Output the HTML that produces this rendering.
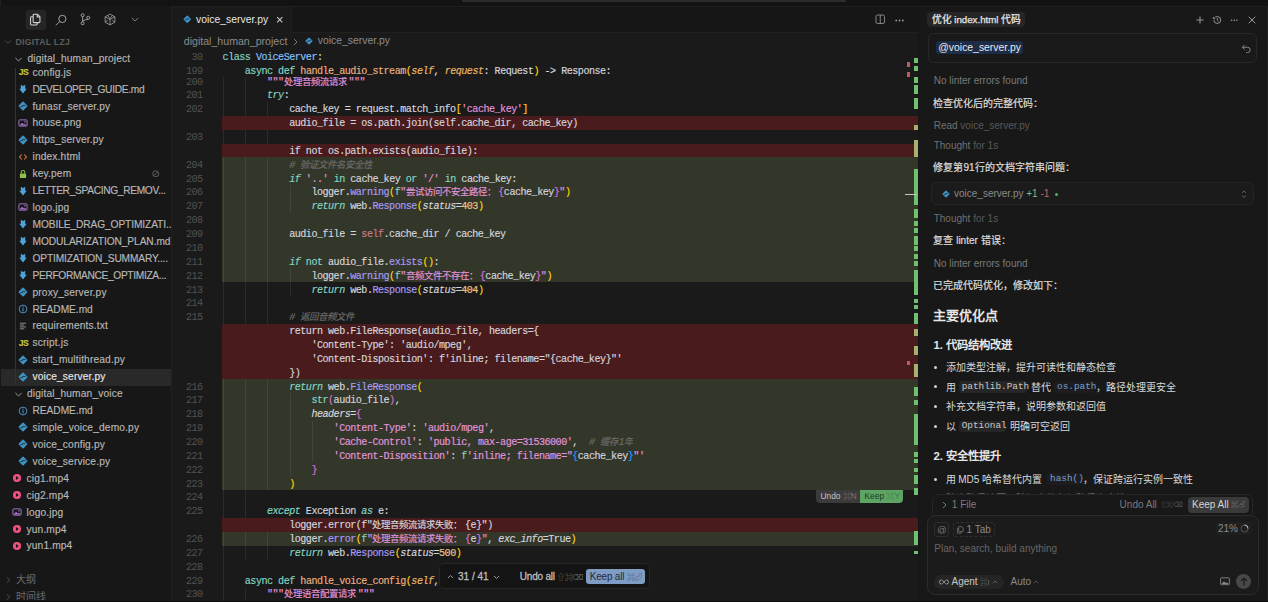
<!DOCTYPE html>
<html lang="zh-CN"><head><meta charset="utf-8"><style>
*{box-sizing:border-box;margin:0;padding:0}
html,body{width:1268px;height:602px;overflow:hidden;background:#181818}
body{position:relative;font-family:"Liberation Sans",sans-serif;font-size:10px;color:#cccccc}
.abs{position:absolute}
#topband{position:absolute;left:0;top:0;width:1268px;height:6.5px;background:#131313;border-bottom:1.5px solid #1f1f1f}
#topscroll{position:absolute;left:462px;top:0;width:384px;height:1.6px;background:#2c2c2c;border-radius:0 0 1px 1px}
#sidebar{position:absolute;left:0;top:6px;width:171px;height:594px;background:#171717;overflow:hidden}
#sbborder{position:absolute;left:171px;top:6.5px;width:1px;height:594px;background:#222222}
#leftedge{position:absolute;left:0;top:0;width:1px;height:602px;background:#222}
.act{position:absolute;top:3.6px;width:19.2px;height:20px;border-radius:3px}
.act svg{position:absolute;left:50%;top:50%;transform:translate(-50%,-50%)}
.row{position:absolute;height:16.92px;line-height:16.92px;white-space:nowrap;color:#b8b8b8;display:flex;align-items:center;-webkit-text-stroke:.15px}
.row.sel{color:#e6e6e6}
.selrow{position:absolute;left:1px;width:170px;height:16.92px;background:#292929}
.fi{width:10px;height:10px;flex:none;margin-right:3.5px;position:relative;top:-1px;left:-.8px}
.jsi{font-weight:700;font-size:8.6px;color:#c8c83e;line-height:10px;letter-spacing:-.55px;text-align:left;padding-left:.5px}
.chev{width:9px;height:9px;flex:none}
.nm{font-size:10.2px}
#editor{position:absolute;left:172px;top:6.5px;width:746px;height:594px;overflow:hidden;background:#1a1a1a}
.ln{position:absolute;left:0;width:202.6px;text-align:right;font-family:"Liberation Mono",monospace;font-size:10.1px;letter-spacing:-0.508px;line-height:13.86px;height:13.86px;color:#535353;white-space:pre}
.cl{position:absolute;left:222.6px;font-family:"Liberation Mono",monospace;font-size:10.1px;letter-spacing:-0.508px;line-height:13.86px;height:13.86px;color:#d6d6dd;white-space:pre;-webkit-text-stroke:.15px}
.cj{display:inline-block;overflow:hidden;white-space:nowrap;vertical-align:top;letter-spacing:0;font-size:9.4px}
.bandr{position:absolute;left:222.4px;width:695.2px;height:13.86px;background:#4a1b1c}
.bandg{position:absolute;left:222.4px;width:695.2px;height:13.86px;background:#33372a}
.guide{position:absolute;width:1px;height:13.86px;background:rgba(255,255,255,.075)}
.kw{color:#83d6c5}
.kwi{color:#83d6c5;font-style:italic}
.cls{color:#87c3ff}
.fn{color:#efb080}
.par{color:#f0b866;font-style:italic}
.parm{color:#d6d6dd;font-style:italic}
.str{color:#e394dc}
.num{color:#ebc88d}
.com{color:#6d6d6d;font-style:italic}
.meth{color:#aa9bf5}
.slf{color:#cc7c8a}
.b1{color:#ffd700}
.b2{color:#da70d6}
.b3{color:#179fff}
.sticky{position:absolute;left:0;top:49.6px;width:918px;height:27.9px;background:#1a1a1a}
#panel{position:absolute;left:918.7px;top:6.5px;width:349.3px;height:594px;background:#181818;overflow:hidden}
#pborder{position:absolute;left:917.5px;top:6.5px;width:1.2px;height:594px;background:#151515}
#bottomband{position:absolute;left:0;top:600.8px;width:1268px;height:3px;background:#0c0c0c}
#rightedge{position:absolute;left:1266.5px;top:6px;width:1.5px;height:596px;background:#202020}
.pt{position:absolute;white-space:nowrap;line-height:12px}
</style></head><body>
<div id="topband"></div><div id="topscroll"></div>
<div id="leftedge"></div>
<div id="sidebar">
  <div class="act" style="left:26.4px;background:#262626"></div>
  <svg class="abs" style="left:29.3px;top:7.2px" width="12.5" height="13" viewBox="0 0 16 16"><path fill="none" stroke="#d4d4d4" stroke-width="1.35" d="M6.5 1.2h4.3l3.2 3.2v6.4a1.2 1.2 0 01-1.2 1.2H6.5a1.2 1.2 0 01-1.2-1.2V2.4a1.2 1.2 0 011.2-1.2zM10.5 1.2v3.5h3.5M5.3 4.5H3.2A1.2 1.2 0 002 5.7v8.1A1.2 1.2 0 003.2 15h6.1a1.2 1.2 0 001.2-1.2V12"/></svg>
  <svg class="abs" style="left:54.5px;top:7.5px" width="12" height="12.5" viewBox="0 0 16 16"><circle cx="9.8" cy="6.2" r="4.8" fill="none" stroke="#a8a8a8" stroke-width="1.3"/><path d="M6.4 9.6L1.2 14.8" stroke="#a8a8a8" stroke-width="1.3"/></svg>
  <svg class="abs" style="left:80px;top:7.3px" width="10.5" height="12.5" viewBox="0 0 14 16"><circle cx="3.5" cy="2.6" r="2" fill="none" stroke="#a8a8a8" stroke-width="1.2"/><circle cx="3.5" cy="13.4" r="2" fill="none" stroke="#a8a8a8" stroke-width="1.2"/><circle cx="11" cy="6" r="2" fill="none" stroke="#a8a8a8" stroke-width="1.2"/><path d="M3.5 4.6v6.8M3.5 11.2c.3-3 7.5-2.4 7.5-3.2" fill="none" stroke="#a8a8a8" stroke-width="1.2"/></svg>
  <svg class="abs" style="left:103.6px;top:7.0px" width="12" height="13" viewBox="0 0 16 16"><path d="M8 .8l6.5 3.6v7.2L8 15.2l-6.5-3.6V4.4z M1.5 4.4L8 8l6.5-3.6M8 8v7.2M4.5 2.6L8 6.5l3.5-3.9M8 6.5V8M1.5 11.6L5 9M14.5 11.6L11 9" fill="none" stroke="#a8a8a8" stroke-width="1.05"/></svg>
  <svg class="abs" style="left:130.5px;top:11.0px" width="8" height="5.5" viewBox="0 0 10 7"><path d="M1 1.2l4 4 4-4" fill="none" stroke="#8a8a8a" stroke-width="1.2"/></svg>
  <svg class="abs" style="left:4px;top:32px" width="8" height="8" viewBox="0 0 10 10"><path d="M1.5 3.2L5 6.7l3.5-3.5" fill="none" stroke="#5a5a5a" stroke-width="1"/></svg>
  <div class="pt" style="left:15.5px;top:29.6px;font-size:8.6px;font-weight:700;color:#5e5e5e;letter-spacing:.3px">DIGITAL LZJ</div>
  <div style="position:absolute;left:0;top:0;width:171px;height:594px;margin-top:-6px">
  <div class="row" style="top:64.68px;left:19px"><span class="fi jsi">JS</span><span class="nm" style="letter-spacing:0.15px">config.js</span></div>
<div class="row" style="top:81.60px;left:19px"><svg class="fi" viewBox="0 0 16 16"><path fill="#4ea2d8" d="M4.5 1l3.5 2 3.5-2v6.5H14L8 15 2 7.5h2.5z"/></svg><span class="nm" style="letter-spacing:-0.3px">DEVELOPER_GUIDE.md</span></div>
<div class="row" style="top:98.52px;left:19px"><svg class="fi" viewBox="0 0 16 16"><path d="M8 2.2L13.8 8 8 13.8 2.2 8z" fill="#3f92c4" stroke="#3f92c4" stroke-width="2.6" stroke-linejoin="round"/><path d="M3.6 8.9H7.4V7.1h5" fill="none" stroke="#1a1a1a" stroke-width="1.1"/></svg><span class="nm" style="letter-spacing:0.15px">funasr_server.py</span></div>
<div class="row" style="top:115.44px;left:19px"><svg class="fi" viewBox="0 0 16 16"><rect x="1.5" y="3" width="13" height="10" rx="1" fill="none" stroke="#a074c4" stroke-width="1.6"/><path fill="#a074c4" d="M2.5 12l4-4.5 3 3 1.5-1.5 3 3z"/><circle cx="11" cy="6" r="1.2" fill="#a074c4"/></svg><span class="nm" style="letter-spacing:0.15px">house.png</span></div>
<div class="row" style="top:132.36px;left:19px"><svg class="fi" viewBox="0 0 16 16"><path d="M8 2.2L13.8 8 8 13.8 2.2 8z" fill="#3f92c4" stroke="#3f92c4" stroke-width="2.6" stroke-linejoin="round"/><path d="M3.6 8.9H7.4V7.1h5" fill="none" stroke="#1a1a1a" stroke-width="1.1"/></svg><span class="nm" style="letter-spacing:0.15px">https_server.py</span></div>
<div class="row" style="top:149.28px;left:19px"><svg class="fi" viewBox="0 0 16 16"><path fill="none" stroke="#e37933" stroke-width="1.8" d="M6 4L2.5 8 6 12M10 4l3.5 4L10 12"/></svg><span class="nm" style="letter-spacing:0.15px">index.html</span></div>
<div class="row" style="top:166.20px;left:19px"><svg class="fi" viewBox="0 0 16 16"><rect x="3" y="7" width="10" height="7.5" rx="1" fill="#8dc149"/><path d="M5.2 7V5.2a2.8 2.8 0 015.6 0V7" fill="none" stroke="#8dc149" stroke-width="1.7"/></svg><span class="nm" style="letter-spacing:0.15px">key.pem</span></div>
<div class="row" style="top:183.12px;left:19px"><svg class="fi" viewBox="0 0 16 16"><path fill="#4ea2d8" d="M4.5 1l3.5 2 3.5-2v6.5H14L8 15 2 7.5h2.5z"/></svg><span class="nm" style="letter-spacing:-0.32px">LETTER_SPACING_REMOV...</span></div>
<div class="row" style="top:200.04px;left:19px"><svg class="fi" viewBox="0 0 16 16"><rect x="1.5" y="3" width="13" height="10" rx="1" fill="none" stroke="#a074c4" stroke-width="1.6"/><path fill="#a074c4" d="M2.5 12l4-4.5 3 3 1.5-1.5 3 3z"/><circle cx="11" cy="6" r="1.2" fill="#a074c4"/></svg><span class="nm" style="letter-spacing:0.15px">logo.jpg</span></div>
<div class="row" style="top:216.96px;left:19px"><svg class="fi" viewBox="0 0 16 16"><path fill="#4ea2d8" d="M4.5 1l3.5 2 3.5-2v6.5H14L8 15 2 7.5h2.5z"/></svg><span class="nm" style="letter-spacing:-0.10px">MOBILE_DRAG_OPTIMIZATI...</span></div>
<div class="row" style="top:233.88px;left:19px"><svg class="fi" viewBox="0 0 16 16"><path fill="#4ea2d8" d="M4.5 1l3.5 2 3.5-2v6.5H14L8 15 2 7.5h2.5z"/></svg><span class="nm" style="letter-spacing:-0.08px">MODULARIZATION_PLAN.md</span></div>
<div class="row" style="top:250.80px;left:19px"><svg class="fi" viewBox="0 0 16 16"><path fill="#4ea2d8" d="M4.5 1l3.5 2 3.5-2v6.5H14L8 15 2 7.5h2.5z"/></svg><span class="nm" style="letter-spacing:-0.16px">OPTIMIZATION_SUMMARY....</span></div>
<div class="row" style="top:267.72px;left:19px"><svg class="fi" viewBox="0 0 16 16"><path fill="#4ea2d8" d="M4.5 1l3.5 2 3.5-2v6.5H14L8 15 2 7.5h2.5z"/></svg><span class="nm" style="letter-spacing:-0.34px">PERFORMANCE_OPTIMIZA...</span></div>
<div class="row" style="top:284.64px;left:19px"><svg class="fi" viewBox="0 0 16 16"><path d="M8 2.2L13.8 8 8 13.8 2.2 8z" fill="#3f92c4" stroke="#3f92c4" stroke-width="2.6" stroke-linejoin="round"/><path d="M3.6 8.9H7.4V7.1h5" fill="none" stroke="#1a1a1a" stroke-width="1.1"/></svg><span class="nm" style="letter-spacing:0.15px">proxy_server.py</span></div>
<div class="row" style="top:301.56px;left:19px"><svg class="fi" viewBox="0 0 16 16"><circle cx="8" cy="8" r="6.2" fill="none" stroke="#4ea2d8" stroke-width="1.4"/><rect x="7.2" y="6.8" width="1.6" height="5" fill="#4ea2d8"/><circle cx="8" cy="4.8" r="1" fill="#4ea2d8"/></svg><span class="nm" style="letter-spacing:-0.04px">README.md</span></div>
<div class="row" style="top:318.48px;left:19px"><svg class="fi" viewBox="0 0 16 16"><path stroke="#9a9a9a" stroke-width="1.4" d="M3 3.5h10M3 6.5h7M3 9.5h10M3 12.5h7"/></svg><span class="nm" style="letter-spacing:0.15px">requirements.txt</span></div>
<div class="row" style="top:335.40px;left:19px"><span class="fi jsi">JS</span><span class="nm" style="letter-spacing:0.15px">script.js</span></div>
<div class="row" style="top:352.32px;left:19px"><svg class="fi" viewBox="0 0 16 16"><path d="M8 2.2L13.8 8 8 13.8 2.2 8z" fill="#3f92c4" stroke="#3f92c4" stroke-width="2.6" stroke-linejoin="round"/><path d="M3.6 8.9H7.4V7.1h5" fill="none" stroke="#1a1a1a" stroke-width="1.1"/></svg><span class="nm" style="letter-spacing:0.15px">start_multithread.py</span></div>
<div class="selrow" style="top:369.24px"></div>
<div class="row sel" style="top:369.24px;left:19px"><svg class="fi" viewBox="0 0 16 16"><path d="M8 2.2L13.8 8 8 13.8 2.2 8z" fill="#3f92c4" stroke="#3f92c4" stroke-width="2.6" stroke-linejoin="round"/><path d="M3.6 8.9H7.4V7.1h5" fill="none" stroke="#1a1a1a" stroke-width="1.1"/></svg><span class="nm" style="letter-spacing:0.15px">voice_server.py</span></div>
<div class="row" style="top:386.16px;left:14px"><svg class="chev" viewBox="0 0 10 10"><path d="M1.5 3.2L5 6.7l3.5-3.5" fill="none" stroke="#9a9a9a" stroke-width="1.1"/></svg><span class="nm" style="margin-left:4px;letter-spacing:.15px">digital_human_voice</span></div>
<div class="row" style="top:403.08px;left:19px"><svg class="fi" viewBox="0 0 16 16"><circle cx="8" cy="8" r="6.2" fill="none" stroke="#4ea2d8" stroke-width="1.4"/><rect x="7.2" y="6.8" width="1.6" height="5" fill="#4ea2d8"/><circle cx="8" cy="4.8" r="1" fill="#4ea2d8"/></svg><span class="nm" style="letter-spacing:-0.04px">README.md</span></div>
<div class="row" style="top:420.00px;left:19px"><svg class="fi" viewBox="0 0 16 16"><path d="M8 2.2L13.8 8 8 13.8 2.2 8z" fill="#3f92c4" stroke="#3f92c4" stroke-width="2.6" stroke-linejoin="round"/><path d="M3.6 8.9H7.4V7.1h5" fill="none" stroke="#1a1a1a" stroke-width="1.1"/></svg><span class="nm" style="letter-spacing:0.15px">simple_voice_demo.py</span></div>
<div class="row" style="top:436.92px;left:19px"><svg class="fi" viewBox="0 0 16 16"><path d="M8 2.2L13.8 8 8 13.8 2.2 8z" fill="#3f92c4" stroke="#3f92c4" stroke-width="2.6" stroke-linejoin="round"/><path d="M3.6 8.9H7.4V7.1h5" fill="none" stroke="#1a1a1a" stroke-width="1.1"/></svg><span class="nm" style="letter-spacing:0.15px">voice_config.py</span></div>
<div class="row" style="top:453.84px;left:19px"><svg class="fi" viewBox="0 0 16 16"><path d="M8 2.2L13.8 8 8 13.8 2.2 8z" fill="#3f92c4" stroke="#3f92c4" stroke-width="2.6" stroke-linejoin="round"/><path d="M3.6 8.9H7.4V7.1h5" fill="none" stroke="#1a1a1a" stroke-width="1.1"/></svg><span class="nm" style="letter-spacing:0.15px">voice_service.py</span></div>
<div class="row" style="top:470.76px;left:13px"><svg class="fi" viewBox="0 0 16 16"><circle cx="8" cy="8" r="6.5" fill="#f0507f"/><path fill="#181818" d="M6.3 4.9v6.2L11 8z"/></svg><span class="nm" style="letter-spacing:0.15px">cig1.mp4</span></div>
<div class="row" style="top:487.68px;left:13px"><svg class="fi" viewBox="0 0 16 16"><circle cx="8" cy="8" r="6.5" fill="#f0507f"/><path fill="#181818" d="M6.3 4.9v6.2L11 8z"/></svg><span class="nm" style="letter-spacing:0.15px">cig2.mp4</span></div>
<div class="row" style="top:504.60px;left:13px"><svg class="fi" viewBox="0 0 16 16"><rect x="1.5" y="3" width="13" height="10" rx="1" fill="none" stroke="#a074c4" stroke-width="1.6"/><path fill="#a074c4" d="M2.5 12l4-4.5 3 3 1.5-1.5 3 3z"/><circle cx="11" cy="6" r="1.2" fill="#a074c4"/></svg><span class="nm" style="letter-spacing:0.15px">logo.jpg</span></div>
<div class="row" style="top:521.52px;left:13px"><svg class="fi" viewBox="0 0 16 16"><circle cx="8" cy="8" r="6.5" fill="#f0507f"/><path fill="#181818" d="M6.3 4.9v6.2L11 8z"/></svg><span class="nm" style="letter-spacing:0.15px">yun.mp4</span></div>
<div class="row" style="top:538.44px;left:13px"><svg class="fi" viewBox="0 0 16 16"><circle cx="8" cy="8" r="6.5" fill="#f0507f"/><path fill="#181818" d="M6.3 4.9v6.2L11 8z"/></svg><span class="nm" style="letter-spacing:0.15px">yun1.mp4</span></div>
  <div class="guide" style="left:14.9px;top:67px;height:318px;background:#333"></div>
  <div class="row" style="top:51.3px;left:0;width:171px;background:#171717;padding-left:14px"><svg class="chev" viewBox="0 0 10 10"><path d="M1.5 3.2L5 6.7l3.5-3.5" fill="none" stroke="#9a9a9a" stroke-width="1.1"/></svg><span class="nm" style="margin-left:4.5px;letter-spacing:.15px">digital_human_project</span></div>
  <svg class="abs" style="left:152px;top:169.5px" width="7.5" height="7.5" viewBox="0 0 10 10"><circle cx="5" cy="5" r="4" fill="none" stroke="#7a7a7a" stroke-width="1"/><path d="M2.5 7.5l5-5" stroke="#7a7a7a" stroke-width="1"/></svg>
  <svg class="abs" style="left:4.5px;top:575.5px" width="7" height="8" viewBox="0 0 8 10"><path d="M2 1.5L5.5 5 2 8.5" fill="none" stroke="#5a5a5a" stroke-width="1"/></svg>
  <div class="pt" style="left:15.5px;top:573.5px;color:#6a6a6a">大纲</div>
  <svg class="abs" style="left:4.5px;top:592.5px" width="7" height="8" viewBox="0 0 8 10"><path d="M2 1.5L5.5 5 2 8.5" fill="none" stroke="#5a5a5a" stroke-width="1"/></svg>
  <div class="pt" style="left:15.5px;top:590.5px;color:#6a6a6a">时间线</div>
  </div>
</div>
<div id="sbborder"></div>
<div id="editor">
  <div style="position:absolute;left:-172px;top:-6.5px;width:1268px;height:602px">
  <div class="abs" style="left:172px;top:6.5px;width:746px;height:26.5px;background:#161616;border-bottom:1.5px solid #202020"></div>
  <div class="abs" style="left:172px;top:6.5px;width:120px;height:26.5px;background:#1a1a1a;border-right:1px solid #202020"></div>
  <svg class="abs" style="left:183px;top:15px;width:8.5px;height:8.5px" viewBox="0 0 16 16"><path d="M8 2.2L13.8 8 8 13.8 2.2 8z" fill="#3f92c4" stroke="#3f92c4" stroke-width="2.6" stroke-linejoin="round"/><path d="M3.6 8.9H7.4V7.1h5" fill="none" stroke="#1a1a1a" stroke-width="1.1"/></svg>
  <div class="pt" style="left:196px;top:13.5px;font-size:10.4px;color:#e6e6e6">voice_server.py</div>
  <svg class="abs" style="left:275.5px;top:15.5px" width="7.5" height="7.5" viewBox="0 0 10 10"><path d="M1.5 1.5l7 7M8.5 1.5l-7 7" stroke="#cfcfcf" stroke-width="1.35"/></svg>
  <svg class="abs" style="left:874.5px;top:14.25px" width="10.5" height="10.5" viewBox="0 0 16 16"><rect x="1.5" y="1.5" width="13" height="13" rx="2.5" fill="none" stroke="#9a9a9a" stroke-width="1.3"/><path d="M8 1.5v13" stroke="#9a9a9a" stroke-width="1.3"/></svg>
  <svg class="abs" style="left:895px;top:18.5px" width="9" height="3" viewBox="0 0 9 3"><circle cx="1.2" cy="1.5" r=".9" fill="#9a9a9a"/><circle cx="4.5" cy="1.5" r=".9" fill="#9a9a9a"/><circle cx="7.8" cy="1.5" r=".9" fill="#9a9a9a"/></svg>
  <div class="pt" style="left:183.8px;top:35.4px;font-size:10.6px;color:#8c8c8c">digital_human_project</div>
  <svg class="abs" style="left:292.5px;top:37.5px" width="5" height="8" viewBox="0 0 5 8"><path d="M1 1l3 3-3 3" fill="none" stroke="#7a7a7a" stroke-width="1"/></svg>
  <svg class="abs" style="left:304.5px;top:37.2px;width:8px;height:8px" viewBox="0 0 16 16"><path d="M8 2.2L13.8 8 8 13.8 2.2 8z" fill="#3f92c4" stroke="#3f92c4" stroke-width="2.6" stroke-linejoin="round"/><path d="M3.6 8.9H7.4V7.1h5" fill="none" stroke="#1a1a1a" stroke-width="1.1"/></svg>
  <div class="pt" style="left:317.8px;top:35.4px;font-size:10.4px;color:#8c8c8c">voice_server.py</div>
  <div style="position:absolute;left:0;top:0">
  <div class="guide" style="left:222.90px;top:74.30px"></div><div class="guide" style="left:245.10px;top:74.30px"></div><div class="ln" style="top:75.60px">200</div><div class="cl" style="top:75.60px">        <span class="str">"""<span class="cj" style="width:64.75px">处理音频流请求</span>"""</span></div><div class="guide" style="left:222.90px;top:88.16px"></div><div class="guide" style="left:245.10px;top:88.16px"></div><div class="ln" style="top:89.46px">201</div><div class="cl" style="top:89.46px">        <span class="kwi">try</span>:</div><div class="guide" style="left:222.90px;top:102.02px"></div><div class="guide" style="left:245.10px;top:102.02px"></div><div class="guide" style="left:267.30px;top:102.02px"></div><div class="ln" style="top:103.32px">202</div><div class="cl" style="top:103.32px">            cache_key = request.match_info<span class="b1">[</span><span class="str">'cache_key'</span><span class="b1">]</span></div><div class="bandr" style="top:115.88px;height:13.86px"></div><div class="cl" style="top:117.18px">            audio_file = os.path.join(self.cache_dir, cache_key)</div><div class="guide" style="left:222.90px;top:129.74px"></div><div class="guide" style="left:245.10px;top:129.74px"></div><div class="guide" style="left:267.30px;top:129.74px"></div><div class="ln" style="top:131.04px">203</div><div class="bandr" style="top:143.60px;height:13.86px"></div><div class="cl" style="top:144.90px">            if not os.path.exists(audio_file):</div><div class="bandg" style="top:157.46px;height:124.74px"></div><div class="guide" style="left:222.90px;top:157.46px"></div><div class="guide" style="left:245.10px;top:157.46px"></div><div class="guide" style="left:267.30px;top:157.46px"></div><div class="ln" style="top:158.76px">204</div><div class="cl" style="top:158.76px">            <span class="com"># <span class="cj" style="width:74.00px">验证文件名安全性</span></span></div><div class="guide" style="left:222.90px;top:171.32px"></div><div class="guide" style="left:245.10px;top:171.32px"></div><div class="guide" style="left:267.30px;top:171.32px"></div><div class="ln" style="top:172.62px">205</div><div class="cl" style="top:172.62px">            <span class="kwi">if</span> <span class="str">'..'</span> <span class="kw">in</span> cache_key <span class="kw">or</span> <span class="str">'/'</span> <span class="kw">in</span> cache_key:</div><div class="guide" style="left:222.90px;top:185.18px"></div><div class="guide" style="left:245.10px;top:185.18px"></div><div class="guide" style="left:267.30px;top:185.18px"></div><div class="guide" style="left:289.50px;top:185.18px"></div><div class="ln" style="top:186.48px">206</div><div class="cl" style="top:186.48px">                logger.<span class="meth">warning</span><span class="b1">(</span><span class="kw">f</span><span class="str">"<span class="cj" style="width:92.50px">尝试访问不安全路径：</span></span><span class="b2">{</span>cache_key<span class="b2">}</span><span class="str">"</span><span class="b1">)</span></div><div class="guide" style="left:222.90px;top:199.04px"></div><div class="guide" style="left:245.10px;top:199.04px"></div><div class="guide" style="left:267.30px;top:199.04px"></div><div class="guide" style="left:289.50px;top:199.04px"></div><div class="ln" style="top:200.34px">207</div><div class="cl" style="top:200.34px">                <span class="kwi">return</span> web.<span class="meth">Response</span><span class="b1">(</span><span class="parm">status</span>=<span class="num">403</span><span class="b1">)</span></div><div class="guide" style="left:222.90px;top:212.90px"></div><div class="guide" style="left:245.10px;top:212.90px"></div><div class="guide" style="left:267.30px;top:212.90px"></div><div class="ln" style="top:214.20px">208</div><div class="guide" style="left:222.90px;top:226.76px"></div><div class="guide" style="left:245.10px;top:226.76px"></div><div class="guide" style="left:267.30px;top:226.76px"></div><div class="ln" style="top:228.06px">209</div><div class="cl" style="top:228.06px">            audio_file = <span class="slf">self</span>.cache_dir / cache_key</div><div class="guide" style="left:222.90px;top:240.62px"></div><div class="guide" style="left:245.10px;top:240.62px"></div><div class="guide" style="left:267.30px;top:240.62px"></div><div class="ln" style="top:241.92px">210</div><div class="guide" style="left:222.90px;top:254.48px"></div><div class="guide" style="left:245.10px;top:254.48px"></div><div class="guide" style="left:267.30px;top:254.48px"></div><div class="ln" style="top:255.78px">211</div><div class="cl" style="top:255.78px">            <span class="kwi">if</span> <span class="kw">not</span> audio_file.<span class="meth">exists</span><span class="b1">(</span><span class="b1">)</span>:</div><div class="guide" style="left:222.90px;top:268.34px"></div><div class="guide" style="left:245.10px;top:268.34px"></div><div class="guide" style="left:267.30px;top:268.34px"></div><div class="guide" style="left:289.50px;top:268.34px"></div><div class="ln" style="top:269.64px">212</div><div class="cl" style="top:269.64px">                logger.<span class="meth">warning</span><span class="b1">(</span><span class="kw">f</span><span class="str">"<span class="cj" style="width:74.00px">音频文件不存在：</span></span><span class="b2">{</span>cache_key<span class="b2">}</span><span class="str">"</span><span class="b1">)</span></div><div class="guide" style="left:222.90px;top:282.20px"></div><div class="guide" style="left:245.10px;top:282.20px"></div><div class="guide" style="left:267.30px;top:282.20px"></div><div class="guide" style="left:289.50px;top:282.20px"></div><div class="ln" style="top:283.50px">213</div><div class="cl" style="top:283.50px">                <span class="kwi">return</span> web.<span class="meth">Response</span><span class="b1">(</span><span class="parm">status</span>=<span class="num">404</span><span class="b1">)</span></div><div class="guide" style="left:222.90px;top:296.06px"></div><div class="guide" style="left:245.10px;top:296.06px"></div><div class="guide" style="left:267.30px;top:296.06px"></div><div class="ln" style="top:297.36px">214</div><div class="guide" style="left:222.90px;top:309.92px"></div><div class="guide" style="left:245.10px;top:309.92px"></div><div class="guide" style="left:267.30px;top:309.92px"></div><div class="ln" style="top:311.22px">215</div><div class="cl" style="top:311.22px">            <span class="com"># <span class="cj" style="width:55.50px">返回音频文件</span></span></div><div class="bandr" style="top:323.78px;height:55.44px"></div><div class="cl" style="top:325.08px">            return web.FileResponse(audio_file, headers={</div><div class="cl" style="top:338.94px">                'Content-Type': 'audio/mpeg',</div><div class="cl" style="top:352.80px">                'Content-Disposition': f'inline; filename="{cache_key}"'</div><div class="cl" style="top:366.66px">            })</div><div class="bandg" style="top:379.22px;height:110.88px"></div><div class="guide" style="left:222.90px;top:379.22px"></div><div class="guide" style="left:245.10px;top:379.22px"></div><div class="guide" style="left:267.30px;top:379.22px"></div><div class="ln" style="top:380.52px">216</div><div class="cl" style="top:380.52px">            <span class="kwi">return</span> web.<span class="meth">FileResponse</span><span class="b1">(</span></div><div class="guide" style="left:222.90px;top:393.08px"></div><div class="guide" style="left:245.10px;top:393.08px"></div><div class="guide" style="left:267.30px;top:393.08px"></div><div class="guide" style="left:289.50px;top:393.08px"></div><div class="ln" style="top:394.38px">217</div><div class="cl" style="top:394.38px">                <span class="kw">str</span><span class="b2">(</span>audio_file<span class="b2">)</span>,</div><div class="guide" style="left:222.90px;top:406.94px"></div><div class="guide" style="left:245.10px;top:406.94px"></div><div class="guide" style="left:267.30px;top:406.94px"></div><div class="guide" style="left:289.50px;top:406.94px"></div><div class="ln" style="top:408.24px">218</div><div class="cl" style="top:408.24px">                <span class="parm">headers</span>=<span class="b2">{</span></div><div class="guide" style="left:222.90px;top:420.80px"></div><div class="guide" style="left:245.10px;top:420.80px"></div><div class="guide" style="left:267.30px;top:420.80px"></div><div class="guide" style="left:289.50px;top:420.80px"></div><div class="guide" style="left:311.70px;top:420.80px"></div><div class="ln" style="top:422.10px">219</div><div class="cl" style="top:422.10px">                    <span class="str">'Content-Type'</span>: <span class="str">'audio/mpeg'</span>,</div><div class="guide" style="left:222.90px;top:434.66px"></div><div class="guide" style="left:245.10px;top:434.66px"></div><div class="guide" style="left:267.30px;top:434.66px"></div><div class="guide" style="left:289.50px;top:434.66px"></div><div class="guide" style="left:311.70px;top:434.66px"></div><div class="ln" style="top:435.96px">220</div><div class="cl" style="top:435.96px">                    <span class="str">'Cache-Control'</span>: <span class="str">'public, max-age=31536000'</span>,  <span class="com"># <span class="cj" style="width:18.50px">缓存</span>1<span class="cj" style="width:9.25px">年</span></span></div><div class="guide" style="left:222.90px;top:448.52px"></div><div class="guide" style="left:245.10px;top:448.52px"></div><div class="guide" style="left:267.30px;top:448.52px"></div><div class="guide" style="left:289.50px;top:448.52px"></div><div class="guide" style="left:311.70px;top:448.52px"></div><div class="ln" style="top:449.82px">221</div><div class="cl" style="top:449.82px">                    <span class="str">'Content-Disposition'</span>: <span class="kw">f</span><span class="str">'inline; filename="</span><span class="b3">{</span>cache_key<span class="b3">}</span><span class="str">"'</span></div><div class="guide" style="left:222.90px;top:462.38px"></div><div class="guide" style="left:245.10px;top:462.38px"></div><div class="guide" style="left:267.30px;top:462.38px"></div><div class="guide" style="left:289.50px;top:462.38px"></div><div class="ln" style="top:463.68px">222</div><div class="cl" style="top:463.68px">                <span class="b2">}</span></div><div class="guide" style="left:222.90px;top:476.24px"></div><div class="guide" style="left:245.10px;top:476.24px"></div><div class="guide" style="left:267.30px;top:476.24px"></div><div class="ln" style="top:477.54px">223</div><div class="cl" style="top:477.54px">            <span class="b1">)</span></div><div class="guide" style="left:222.90px;top:490.10px"></div><div class="guide" style="left:245.10px;top:490.10px"></div><div class="ln" style="top:491.40px">224</div><div class="guide" style="left:222.90px;top:503.96px"></div><div class="guide" style="left:245.10px;top:503.96px"></div><div class="ln" style="top:505.26px">225</div><div class="cl" style="top:505.26px">        <span class="kwi">except</span> Exception <span class="kwi">as</span> e:</div><div class="bandr" style="top:517.82px;height:13.86px"></div><div class="cl" style="top:519.12px">            logger.error(f"<span class="cj" style="width:92.50px">处理音频流请求失败：</span>{e}")</div><div class="bandg" style="top:531.68px;height:13.86px"></div><div class="guide" style="left:222.90px;top:531.68px"></div><div class="guide" style="left:245.10px;top:531.68px"></div><div class="guide" style="left:267.30px;top:531.68px"></div><div class="ln" style="top:532.98px">226</div><div class="cl" style="top:532.98px">            logger.<span class="meth">error</span><span class="b1">(</span><span class="kw">f</span><span class="str">"<span class="cj" style="width:92.50px">处理音频流请求失败：</span></span><span class="b2">{</span>e<span class="b2">}</span><span class="str">"</span>, <span class="parm">exc_info</span>=True<span class="b1">)</span></div><div class="guide" style="left:222.90px;top:545.54px"></div><div class="guide" style="left:245.10px;top:545.54px"></div><div class="guide" style="left:267.30px;top:545.54px"></div><div class="ln" style="top:546.84px">227</div><div class="cl" style="top:546.84px">            <span class="kwi">return</span> web.<span class="meth">Response</span><span class="b1">(</span><span class="parm">status</span>=<span class="num">500</span><span class="b1">)</span></div><div class="guide" style="left:222.90px;top:559.40px"></div><div class="ln" style="top:560.70px">228</div><div class="guide" style="left:222.90px;top:573.26px"></div><div class="ln" style="top:574.56px">229</div><div class="cl" style="top:574.56px">    <span class="kw">async</span> <span class="kw">def</span> <span class="fn">handle_voice_config</span><span class="b1">(</span><span class="par">self</span>, <span class="par">request</span>: Request<span class="b1">)</span> -&gt; Response:</div><div class="guide" style="left:222.90px;top:587.12px"></div><div class="guide" style="left:245.10px;top:587.12px"></div><div class="ln" style="top:588.42px">230</div><div class="cl" style="top:588.42px">        <span class="str">"""<span class="cj" style="width:74.00px">处理语音配置请求</span>"""</span></div>
  <div class="sticky">
<div class="ln" style="top:1.3px">30</div><div class="cl" style="top:1.3px"><span class="kw">class</span> <span class="cls">VoiceServer</span>:</div>
<div class="ln" style="top:15.16px">199</div><div class="cl" style="top:15.16px">    <span class="kw">async</span> <span class="kw">def</span> <span class="fn">handle_audio_stream</span><span class="b1">(</span><span class="par">self</span>, <span class="par">request</span>: Request<span class="b1">)</span> -&gt; Response:</div>
</div>
  <div class="abs" style="left:816.4px;top:490px;width:43.6px;height:12.6px;background:#3b3b3b;border-radius:0 0 0 4px"></div>
<div class="abs" style="left:860px;top:490px;width:43px;height:12.6px;background:#5da465;border-radius:0 0 4px 0"></div>
<div class="pt" style="left:820.5px;top:489.3px;line-height:14px;font-size:8.4px;color:#c4c4c4">Undo <span style="color:#7a7a7a">⌘N</span></div>
<div class="pt" style="left:864.5px;top:489.3px;line-height:14px;font-size:8.4px;color:#1f3a22">Keep <span style="color:#3f7a47">⌘Y</span></div>
<div class="abs" style="left:438.7px;top:563.2px;width:211.3px;height:26.3px;background:#141414;border:1px solid #262626;border-radius:5px"></div>
<svg class="abs" style="left:447px;top:573.5px" width="7" height="5" viewBox="0 0 7 5"><path d="M1 4l2.5-2.5L6 4" fill="none" stroke="#9a9a9a" stroke-width="1"/></svg>
<div class="pt" style="left:458px;top:569.5px;line-height:14px;font-size:10px;font-weight:400;-webkit-text-stroke:.3px #bdbdbd;color:#bdbdbd">31 / 41</div>
<svg class="abs" style="left:492.5px;top:574.5px" width="7" height="5" viewBox="0 0 7 5"><path d="M1 1l2.5 2.5L6 1" fill="none" stroke="#9a9a9a" stroke-width="1"/></svg>
<div class="pt" style="left:519.8px;top:569.5px;line-height:14px;font-size:10px;font-weight:400;-webkit-text-stroke:.3px #bdbdbd;color:#bdbdbd;letter-spacing:-.2px">Undo all <span style="font-size:8px;color:#6a6a6a;font-weight:400;-webkit-text-stroke:0;letter-spacing:-.6px">⇧⌘⌫</span></div>
<div class="abs" style="left:586.4px;top:569px;width:58.6px;height:15px;background:#7e9cc4;border-radius:3px"></div>
<div class="pt" style="left:589.7px;top:569.5px;line-height:14px;font-size:10px;color:#1e2a3a;letter-spacing:-.2px">Keep all <span style="font-size:8px;color:#3e5270;letter-spacing:-.6px">⌘⏎</span></div>
<div class="abs" style="left:914px;top:57.5px;width:3.5px;height:5.5px;background:#70c070"></div>
<div class="abs" style="left:914px;top:66px;width:3.5px;height:5.3px;background:#70c070"></div>
<div class="abs" style="left:914px;top:77.4px;width:3.5px;height:5.5px;background:#70c070"></div>
<div class="abs" style="left:914px;top:84.9px;width:3.5px;height:9.1px;background:#70c070"></div>
<div class="abs" style="left:914px;top:97.7px;width:3.5px;height:11.3px;background:#70c070"></div>
<div class="abs" style="left:914px;top:124.8px;width:3.5px;height:4.9px;background:#a8b070"></div>
<div class="abs" style="left:914px;top:139.7px;width:3.5px;height:16.9px;background:#a8b070"></div>
<div class="abs" style="left:914px;top:169px;width:3.5px;height:36.0px;background:#70c070"></div>
<div class="abs" style="left:914px;top:208.8px;width:3.5px;height:9.2px;background:#70c070"></div>
<div class="abs" style="left:914px;top:221.4px;width:3.5px;height:5.0px;background:#70c070"></div>
<div class="abs" style="left:914px;top:228px;width:3.5px;height:5.0px;background:#70c070"></div>
<div class="abs" style="left:914px;top:236px;width:3.5px;height:8.6px;background:#70c070"></div>
<div class="abs" style="left:914px;top:246px;width:3.5px;height:4.6px;background:#70c070"></div>
<div class="abs" style="left:914px;top:253.6px;width:3.5px;height:5.0px;background:#70c070"></div>
<div class="abs" style="left:914px;top:260.6px;width:3.5px;height:5.0px;background:#70c070"></div>
<div class="abs" style="left:914px;top:269.6px;width:3.5px;height:25.4px;background:#70c070"></div>
<div class="abs" style="left:914px;top:298.8px;width:3.5px;height:4.7px;background:#70c070"></div>
<div class="abs" style="left:914px;top:305px;width:3.5px;height:4.4px;background:#70c070"></div>
<div class="abs" style="left:914px;top:312.8px;width:3.5px;height:11.6px;background:#70c070"></div>
<div class="abs" style="left:914px;top:329.4px;width:3.5px;height:6.6px;background:#a8b070"></div>
<div class="abs" style="left:914px;top:345.8px;width:3.5px;height:9.1px;background:#a8b070"></div>
<div class="abs" style="left:914px;top:364px;width:3.5px;height:13.4px;background:#a8b070"></div>
<div class="abs" style="left:914px;top:386.5px;width:3.5px;height:9.0px;background:#70c070"></div>
<div class="abs" style="left:914px;top:400px;width:3.5px;height:4.6px;background:#70c070"></div>
<div class="abs" style="left:914px;top:413.6px;width:3.5px;height:31.6px;background:#70c070"></div>
<div class="abs" style="left:914px;top:452px;width:3.5px;height:4.5px;background:#70c070"></div>
<div class="abs" style="left:914px;top:458.8px;width:3.5px;height:4.5px;background:#70c070"></div>
<div class="abs" style="left:914px;top:467.8px;width:3.5px;height:4.5px;background:#70c070"></div>
<div class="abs" style="left:914px;top:474.6px;width:3.5px;height:9.0px;background:#70c070"></div>
<div class="abs" style="left:914px;top:488px;width:3.5px;height:7.0px;background:#70c070"></div>
<div class="abs" style="left:914px;top:531px;width:3.5px;height:13.6px;background:#70c070"></div>
<div class="abs" style="left:914px;top:550.5px;width:3.5px;height:3.2px;background:#70c070"></div>
<div class="abs" style="left:907px;top:62px;width:3.4px;height:5px;background:#c05a60"></div>
<div class="abs" style="left:907px;top:72px;width:3.4px;height:5px;background:#c05a60"></div>
<div class="abs" style="left:907px;top:361px;width:3.4px;height:4px;background:#c05a60"></div>
<div class="abs" style="left:905px;top:194.3px;width:12px;height:1px;background:#c8c8c8"></div>
  </div>
  </div>
</div>
<div id="pborder"></div>
<div id="panel"><div style="position:absolute;left:-918.7px;top:-6.5px;width:1268px;height:602px"><div class="abs" style="left:927.4px;top:11.6px;width:97.2px;height:15.8px;background:#262626;border-radius:4px"></div>
<div class="pt" style="left:931.6px;top:12.80px;line-height:14px;font-size:9.7px;color:#e6e6e6;font-weight:500;-webkit-text-stroke:.25px #e6e6e6">优化 index.html 代码</div>
<svg class="abs" style="left:1196px;top:16px" width="8" height="8" viewBox="0 0 8 8"><path d="M4 .5v7M.5 4h7" stroke="#9a9a9a" stroke-width="1"/></svg>
<svg class="abs" style="left:1211.7px;top:15.2px" width="10" height="10" viewBox="0 0 16 16"><path d="M3 8a5.5 5.5 0 105.5-5.5A5.5 5.5 0 003.9 5" fill="none" stroke="#9a9a9a" stroke-width="1.5"/><path d="M2.2 3.2v2.6h2.6" fill="none" stroke="#9a9a9a" stroke-width="1.5"/><path d="M8.5 5v3.3l2 1.7" fill="none" stroke="#9a9a9a" stroke-width="1.5"/></svg>
<svg class="abs" style="left:1229.8px;top:18.8px" width="8.4" height="2.4" viewBox="0 0 9 3"><circle cx="1.2" cy="1.5" r="1" fill="#9a9a9a"/><circle cx="4.5" cy="1.5" r="1" fill="#9a9a9a"/><circle cx="7.8" cy="1.5" r="1" fill="#9a9a9a"/></svg>
<svg class="abs" style="left:1248px;top:16px" width="8" height="8" viewBox="0 0 8 8"><path d="M.7 .7l6.6 6.6M7.3 .7L.7 7.3" stroke="#9a9a9a" stroke-width="1"/></svg>
<div class="abs" style="left:928px;top:33.1px;width:329px;height:30.3px;border:1px solid #282828;border-radius:6px;background:#191919"></div>
<div class="abs" style="left:935.7px;top:40.7px;width:87.3px;height:13.3px;background:#1e2d47;border-radius:3px"></div>
<div class="pt" style="left:938.3px;top:40.60px;line-height:14px;font-size:10.4px;color:#e4e9f0;font-weight:400;">@voice_server.py</div>
<svg class="abs" style="left:1240.5px;top:43px" width="10.5" height="10.5" viewBox="0 0 16 16"><path d="M5.5 3L2 6.5 5.5 10M2 6.5h8a4 4 0 010 8H8" fill="none" stroke="#8a8a8a" stroke-width="1.5"/></svg>
<div class="pt" style="left:933.7px;top:74.10px;line-height:14px;font-size:10px;color:#7a7a7a;font-weight:400;">No linter errors found</div>
<div class="pt" style="left:933.4px;top:96.80px;line-height:14px;font-size:10px;color:#dedede;font-weight:500;-webkit-text-stroke:.2px #dedede">检查优化后的完整代码：</div>
<div class="pt" style="left:933.7px;top:118.90px;line-height:14px;font-size:10px;color:#585858;font-weight:400;"><span style="color:#707070">Read</span> voice_server.py</div>
<div class="pt" style="left:933.7px;top:139.40px;line-height:14px;font-size:10px;color:#585858;font-weight:400;"><span style="color:#707070">Thought</span> for 1s</div>
<div class="pt" style="left:933.4px;top:161.20px;line-height:14px;font-size:10px;color:#dedede;font-weight:500;-webkit-text-stroke:.2px #dedede">修复第91行的文档字符串问题：</div>
<div class="abs" style="left:931.3px;top:182.3px;width:322.8px;height:22.5px;border:1px solid #252525;border-radius:5px;background:#1b1b1b"></div>
<svg class="abs" style="left:941.5px;top:189.5px;width:8px;height:8px" viewBox="0 0 16 16"><path d="M8 2.2L13.8 8 8 13.8 2.2 8z" fill="#3f92c4" stroke="#3f92c4" stroke-width="2.6" stroke-linejoin="round"/><path d="M3.6 8.9H7.4V7.1h5" fill="none" stroke="#1a1a1a" stroke-width="1.1"/></svg>
<div class="pt" style="left:954px;top:187.30px;line-height:14px;font-size:10px;color:#8a8a8a;font-weight:400;">voice_server.py <span style="color:#86b97a">+1</span> <span style="color:#c9605f">-1</span></div>
<div class="abs" style="left:1055px;top:192.6px;width:3px;height:3px;border-radius:50%;background:#4fb36a"></div>
<svg class="abs" style="left:1240.5px;top:189.5px" width="6" height="8.5" viewBox="0 0 6 9"><path d="M1 3l2-2 2 2M1 6l2 2 2-2" fill="none" stroke="#6a6a6a" stroke-width="1"/></svg>
<div class="pt" style="left:933.7px;top:212.20px;line-height:14px;font-size:10px;color:#585858;font-weight:400;"><span style="color:#707070">Thought</span> for 1s</div>
<div class="pt" style="left:933.4px;top:234.20px;line-height:14px;font-size:10px;color:#dedede;font-weight:500;-webkit-text-stroke:.2px #dedede">复查 linter 错误：</div>
<div class="pt" style="left:933.7px;top:256.90px;line-height:14px;font-size:10px;color:#7a7a7a;font-weight:400;">No linter errors found</div>
<div class="pt" style="left:933.4px;top:278.80px;line-height:14px;font-size:10px;color:#dedede;font-weight:500;-webkit-text-stroke:.2px #dedede">已完成代码优化，修改如下：</div>
<div class="pt" style="left:933.4px;top:309.20px;line-height:14px;font-size:13px;color:#e6e6e6;font-weight:700;">主要优化点</div>
<div class="pt" style="left:933.4px;top:338.30px;line-height:14px;font-size:11.3px;color:#e6e6e6;font-weight:700;">1. 代码结构改进</div>
<div class="abs" style="left:934.2px;top:365.60px;width:3.2px;height:3.2px;border-radius:50%;background:#d0d0d0"></div>
<div class="pt" style="left:945.5px;top:361.00px;line-height:14px;font-size:10px;color:#d8d8d8;font-weight:500;">添加类型注解，提升可读性和静态检查</div>
<div class="abs" style="left:934.2px;top:385.30px;width:3.2px;height:3.2px;border-radius:50%;background:#d0d0d0"></div>
<div class="pt" style="left:945.5px;top:380.60px;line-height:14px;font-size:10px;color:#d8d8d8;font-weight:500;">用</div>
<div class="abs" style="left:958.7px;top:381.3px;width:68.6px;height:11.7px;background:#262626;border-radius:3px"></div><div class="pt" style="left:961.7px;top:380.10px;line-height:14px;font-family:'Liberation Mono',monospace;font-size:9.4px;color:#c8c8c8">pathlib.Path</div>
<div class="pt" style="left:1030.8px;top:380.60px;line-height:14px;font-size:10px;color:#d8d8d8;font-weight:500;">替代</div>
<div class="abs" style="left:1054px;top:381.3px;width:40.8px;height:11.7px;background:#1d1d1f;border-radius:3px"></div><div class="pt" style="left:1057px;top:380.10px;line-height:14px;font-family:'Liberation Mono',monospace;font-size:9.4px;color:#7aa0d0">os.path</div>
<div class="pt" style="left:1096px;top:380.60px;line-height:14px;font-size:10px;color:#d8d8d8;font-weight:500;">，路径处理更安全</div>
<div class="abs" style="left:934.2px;top:404.60px;width:3.2px;height:3.2px;border-radius:50%;background:#d0d0d0"></div>
<div class="pt" style="left:945.5px;top:400.20px;line-height:14px;font-size:10px;color:#d8d8d8;font-weight:500;">补充文档字符串，说明参数和返回值</div>
<div class="abs" style="left:934.2px;top:424.50px;width:3.2px;height:3.2px;border-radius:50%;background:#d0d0d0"></div>
<div class="pt" style="left:945.5px;top:419.80px;line-height:14px;font-size:10px;color:#d8d8d8;font-weight:500;">以</div>
<div class="abs" style="left:958.7px;top:420.5px;width:47.7px;height:11.7px;background:#262626;border-radius:3px"></div><div class="pt" style="left:961.7px;top:419.30px;line-height:14px;font-family:'Liberation Mono',monospace;font-size:9.4px;color:#c8c8c8">Optional</div>
<div class="pt" style="left:1009.5px;top:419.80px;line-height:14px;font-size:10px;color:#d8d8d8;font-weight:500;">明确可空返回</div>
<div class="pt" style="left:933.4px;top:449.00px;line-height:14px;font-size:11.3px;color:#e6e6e6;font-weight:700;">2. 安全性提升</div>
<div class="abs" style="left:934.2px;top:477.60px;width:3.2px;height:3.2px;border-radius:50%;background:#d0d0d0"></div>
<div class="pt" style="left:945.5px;top:472.60px;line-height:14px;font-size:10px;color:#d8d8d8;font-weight:500;">用 MD5 哈希替代内置</div>
<div class="abs" style="left:1047px;top:473.2px;width:33.8px;height:11.7px;background:#1d1d1f;border-radius:3px"></div><div class="pt" style="left:1050px;top:472.00px;line-height:14px;font-family:'Liberation Mono',monospace;font-size:9.4px;color:#7aa0d0">hash()</div>
<div class="pt" style="left:1083px;top:472.60px;line-height:14px;font-size:10px;color:#d8d8d8;font-weight:500;">，保证跨运行实例一致性</div>
<div class="abs" style="left:934.2px;top:496.40px;width:3.2px;height:3.2px;border-radius:50%;background:#d0d0d0"></div>
<div class="pt" style="left:945.5px;top:491.60px;line-height:14px;font-size:10px;color:#6a6a6a;font-weight:500;">防止路径遍历，验证文件名与路径安全性</div>
<div class="abs" style="left:931.8px;top:494.4px;width:321.6px;height:30px;border:1px solid #262626;border-radius:6px;background:#181818"></div>
<svg class="abs" style="left:941.8px;top:500.5px" width="5" height="8" viewBox="0 0 5 8"><path d="M1 1l3 3-3 3" fill="none" stroke="#7a7a7a" stroke-width="1"/></svg>
<div class="pt" style="left:951.8px;top:497.50px;line-height:14px;font-size:10px;color:#7e7e7e;font-weight:400;">1 File</div>
<div class="pt" style="left:1119.6px;top:497.50px;line-height:14px;font-size:10px;color:#7a7a7a;font-weight:400;">Undo All <span style="font-size:7px;color:#585858;letter-spacing:-.3px;vertical-align:1px">⇧⌘⌫</span></div>
<div class="abs" style="left:1188.2px;top:497px;width:61.3px;height:15.6px;background:#3a3a3a;border-radius:4px"></div>
<div class="pt" style="left:1192px;top:497.80px;line-height:14px;font-size:10px;color:#d4d4d4;font-weight:400;">Keep All <span style="font-size:7px;color:#8a8a8a;letter-spacing:-.3px;vertical-align:1px">⌘⏎</span></div>
<div class="abs" style="left:927.3px;top:515.2px;width:331.6px;height:80.3px;border:1px solid #2c2c2c;border-radius:8px;background:#1b1b1b"></div>
<div class="abs" style="left:934.3px;top:522.4px;width:14.4px;height:14.7px;border:1px solid #2e2e2e;border-radius:3px"></div>
<div class="pt" style="left:937px;top:522.80px;line-height:14px;font-size:9.5px;color:#7a7a7a;font-weight:400;">@</div>
<div class="abs" style="left:952.6px;top:522.4px;width:42px;height:14.7px;border:1px dashed #2f2f2f;border-radius:3px"></div>
<svg class="abs" style="left:956px;top:525.2px" width="8.5" height="9" viewBox="0 0 16 16"><path d="M6 2.5h4.5l3 3V11a1 1 0 01-1 1H6a1 1 0 01-1-1V3.5a1 1 0 011-1zM5 5.5H3.5a1 1 0 00-1 1V14a1 1 0 001 1H9a1 1 0 001-1v-2" fill="none" stroke="#7a7a7a" stroke-width="1.5"/></svg>
<div class="pt" style="left:966.5px;top:522.80px;line-height:14px;font-size:10px;color:#8a8a8a;font-weight:400;">1 Tab</div>
<div class="abs" style="left:1215.5px;top:522px;width:36px;height:13.2px;background:#1f1f1f;border-radius:3px"></div>
<div class="pt" style="left:1218px;top:521.80px;line-height:14px;font-size:10px;color:#8a8a8a;font-weight:400;">21%</div>
<svg class="abs" style="left:1240.4px;top:524px" width="9" height="9" viewBox="0 0 10 10"><circle cx="5" cy="5" r="3.9" fill="none" stroke="#555" stroke-width="1.1"/><path d="M5 1.1A3.9 3.9 0 018.9 5" fill="none" stroke="#bbb" stroke-width="1.1"/></svg>
<div class="pt" style="left:934.3px;top:542.20px;line-height:14px;font-size:10px;color:#666666;font-weight:400;">Plan, search, build anything</div>
<div class="abs" style="left:934.3px;top:574.5px;width:69.5px;height:14px;background:#252525;border-radius:7px"></div>
<svg class="abs" style="left:939px;top:578.6px" width="10" height="6" viewBox="0 0 16 9"><path d="M4 1.2a3.3 3.3 0 100 6.6c2.2 0 5.8-6.6 8-6.6a3.3 3.3 0 110 6.6c-2.2 0-5.8-6.6-8-6.6z" fill="none" stroke="#9a9a9a" stroke-width="1.5"/></svg>
<div class="pt" style="left:951.5px;top:574.50px;line-height:14px;font-size:10px;color:#c8c8c8;font-weight:400;">Agent <span style="font-size:7.5px;color:#6a6a6a">⌘I</span></div>
<svg class="abs" style="left:992px;top:579.5px" width="6" height="4" viewBox="0 0 6 4"><path d="M.8 3.2L3 1l2.2 2.2" fill="none" stroke="#6a6a6a" stroke-width=".9"/></svg>
<div class="pt" style="left:1010.6px;top:574.50px;line-height:14px;font-size:10px;color:#8a8a8a;font-weight:400;">Auto</div>
<svg class="abs" style="left:1033px;top:579.5px" width="6" height="4" viewBox="0 0 6 4"><path d="M.8 3.2L3 1l2.2 2.2" fill="none" stroke="#5a5a5a" stroke-width=".9"/></svg>
<svg class="abs" style="left:1220.2px;top:577px" width="10" height="8.5" viewBox="0 0 16 13"><rect x="1" y="1" width="14" height="11" rx="1.2" fill="none" stroke="#8a8a8a" stroke-width="1.4"/><path d="M2 11l4.5-4.5 3 3 1.5-1.5 3 3" fill="#8a8a8a"/></svg>
<div class="abs" style="left:1236.3px;top:574.3px;width:14.8px;height:14.8px;border-radius:50%;background:#484848"></div>
<svg class="abs" style="left:1239.7px;top:577.2px" width="8" height="9" viewBox="0 0 8 9"><path d="M4 8.5V1M1 4l3-3 3 3" fill="none" stroke="#1b1b1b" stroke-width="1.2"/></svg></div></div>
<div id="rightedge"></div>
<div id="bottomband"></div>
</body></html>
